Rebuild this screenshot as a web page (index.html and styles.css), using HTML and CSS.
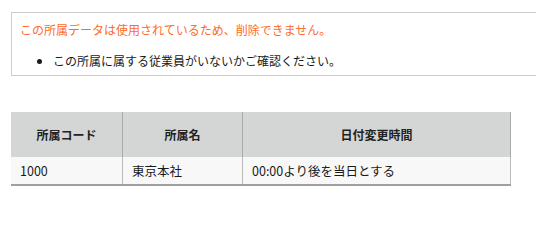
FILE: index.html
```html
<!DOCTYPE html>
<html lang="ja">
<head>
<meta charset="utf-8">
<link rel="stylesheet" href="styles.css">
</head>
<body>
<div class="page">
  <div class="msg">
    <p class="msg-title">この所属データは使用されているため、削除できません。</p>
    <ul class="msg-list">
      <li>この所属に属する従業員がいないかご確認ください。</li>
    </ul>
  </div>
  <table class="grid">
    <thead>
      <tr>
        <th class="c1">所属コード</th>
        <th class="c2">所属名</th>
        <th class="c3">日付変更時間</th>
      </tr>
    </thead>
    <tbody>
      <tr>
        <td>1000</td>
        <td>東京本社</td>
        <td>00:00より後を当日とする</td>
      </tr>
    </tbody>
  </table>
</div>
</body>
</html>
```
FILE: styles.css
```css
html, body {
  margin: 0;
  padding: 0;
  background: #fff;
}
body {
  font-family: "Noto Sans CJK JP", "Noto Sans", sans-serif;
  font-size: 12px;
  color: #222;
}
.page {
  padding: 12px 0 0 11px;
}
.msg {
  border: 1px solid #cccccc;
  border-right: 0;
  padding: 8px 8px 5px 8px;
}
.msg-title {
  margin: 0;
  line-height: 18px;
  color: #ff6a2a;
}
.msg-list {
  margin: 13px 0 0 0;
  padding-left: 33px;
  line-height: 18px;
  color: #1a1a1a;
}
.grid {
  margin-top: 36px;
  border-collapse: collapse;
  width: 500px;
  border-bottom: 2px solid #a0a0a0;
}
.grid th {
  background: #d4d6d5;
  height: 45px;
  padding: 0;
  font-weight: bold;
  text-align: center;
  border-right: 1px solid #aaaaaa;
  color: #222;
}
.grid td {
  background: #f8f8f8;
  height: 27px;
  padding: 0 9px;
  text-align: left;
  border-right: 1px solid #bbbbbb;
  color: #1a1a1a;
  font-size: 12.5px;
}
.grid .c1 { width: 111px; }
.grid .c2 { width: 119px; }
```
